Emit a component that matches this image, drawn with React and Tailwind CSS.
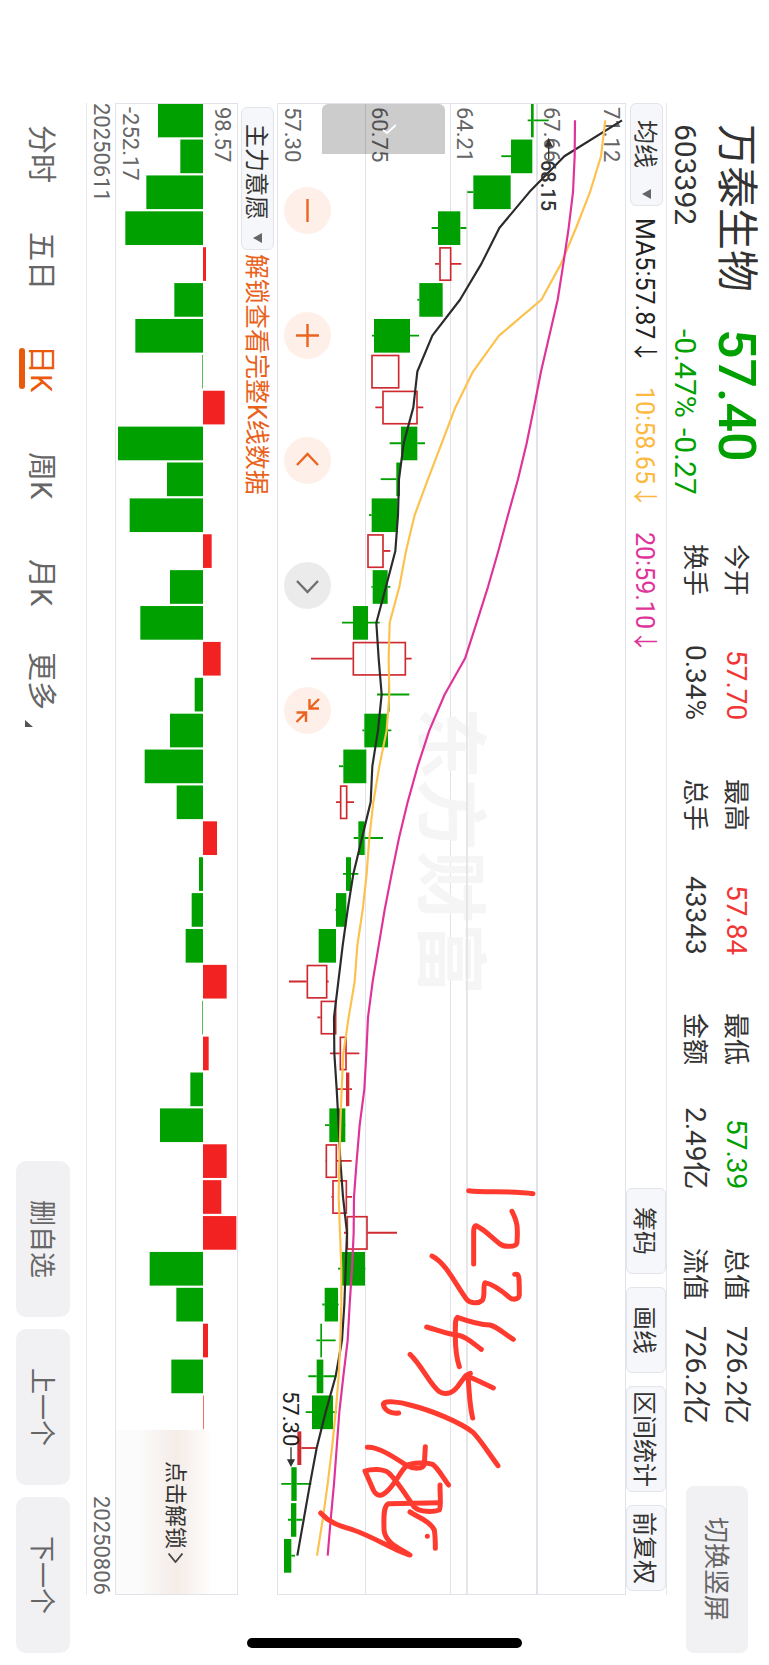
import React from "react";

const GREEN = "#00a000";
const RED = "#cf2a30";

// [wick low, body low, body high, wick high, direction]; "f" is a rise too small to leave a hollow body
const candles = [
  [773, 783, 791, 836, "d"],
  [694, 723, 787, 787, "d"],
  [592, 610, 722, 722, "d"],
  [485, 504, 571, 589, "d"],
  [495, 508, 543, 574, "u"],
  [442, 448, 518, 518, "d"],
  [306, 312, 420, 447, "d"],
  [304, 304, 387, 387, "u"],
  [316, 337, 442, 460, "u"],
  [359, 393, 442, 465, "d"],
  [332, 379, 390, 390, "d"],
  [297, 305, 383, 383, "d"],
  [292, 292, 340, 361, "u"],
  [304, 308, 353, 361, "d"],
  [216, 249, 294, 329, "d"],
  [123, 248, 407, 425, "u"],
  [321, 354, 359, 418, "d"],
  [277, 283, 354, 364, "d"],
  [207, 220, 289, 289, "d"],
  [198, 210, 231, 252, "u"],
  [251, 265, 284, 339, "d"],
  [219, 228, 243, 265, "d"],
  [196, 198, 229, 229, "d"],
  [146, 146, 198, 198, "d"],
  [57, 110, 171, 176, "u"],
  [142, 152, 198, 198, "u"],
  [180, 209, 229, 268, "u"],
  [201, 228, 238, 246, "f"],
  [165, 178, 226, 227, "d"],
  [166, 167, 200, 245, "u"],
  [184, 187, 230, 246, "u"],
  [222, 230, 292, 381, "u"],
  [204, 215, 285, 286, "d"],
  [157, 164, 204, 206, "d"],
  [139, 151, 156, 197, "d"],
  [115, 140, 160, 198, "d"],
  [107, 126, 189, 201, "d"],
  [82, 82, 94, 140, "f"],
  [34, 64, 80, 124, "d"],
  [54, 63, 79, 97, "d"],
  [42, 42, 64, 75, "d"],
];

const ma5 = [1056, 883, 778, 688, 634, 570, 487, 442, 430, 401, 387, 384, 376, 348, 319, 326, 335, 324, 307, 302, 276, 250, 233, 218, 205, 192, 193, 200, 206, 211, 219, 231, 227, 223, 216, 197, 167, 140, 120, 101, 82];
const ma10 = [1006, 993, 960, 918, 873, 814, 687, 609, 556, 515, 474, 434, 408, 388, 359, 356, 358, 350, 328, 310, 298, 290, 278, 262, 254, 236, 220, 215, 211, 208, 206, 210, 214, 214, 211, 206, 197, 186, 173, 158, 141];
const ma20 = [915, 914, 909, 896, 880, 863, 838, 813, 792, 770, 744, 714, 685, 654, 620, 585, 524, 478, 443, 413, 387, 365, 344, 326, 308, 294, 289, 283, 269, 260, 252, 251, 246, 239, 233, 220, 208, 200, 192, 182, 173];

const flows = [474, 541, 439, 376, 618, 523, 406, 607, 674, 354, 501, 389, 635, 510, 421, 662, 584, 510, 434, 530, 651, 597, 575, 557, 680, 607, 626, 571, 480, 680, 664, 709, 449, 529, 624, 514, 611];

const STEP = 107.65;
const FIRST = 49;
const at = (i) => FIRST + i * STEP;
const line = (values) => values.map((v, i) => `${v},${at(i)}`).join(" ");

const stats = [
  [["今开", "57.70", "text-[#f23636]"], ["换手", "0.34%", "text-[#333]"]],
  [["最高", "57.84", "text-[#f23636]"], ["总手", "43343", "text-[#333]"]],
  [["最低", "57.39", "text-[#00a000]"], ["金额", "2.49亿", "text-[#333]"]],
  [["总值", "726.2亿", "text-[#333]"], ["流值", "726.2亿", "text-[#333]"]],
];

function Header() {
  return (
    <header className="flex w-[102px] shrink-0 pt-[124px] pb-[12px]">
      <div className="flex h-[205px] shrink-0 flex-col gap-[10px] pr-[9px]">
        <h1 className="text-[42px] leading-[48px] text-[#333]">万泰生物</h1>
        <p className="text-[30px] leading-[34px] text-[#333]">603392</p>
      </div>
      <div className="flex h-[215px] shrink-0 flex-col gap-[10px] pr-[9px] text-[#00a000]">
        <p className="text-[52px] font-medium leading-[48px]">57.40</p>
        <p className="flex gap-[10px] text-[30px] leading-[34px]">
          <span>-0.47%</span>
          <span>-0.27</span>
        </p>
      </div>
      <div className="flex flex-1 gap-[58px] pr-[17px]">
        {stats.map((column) => (
          <dl key={column[0][0]} className="flex flex-1 flex-col gap-[9px]">
            {column.map(([label, value, tone]) => (
              <div key={label} className="flex justify-between leading-[32px]">
                <dt className="text-[26px] text-[#333]">{label}</dt>
                <dd className={`text-[28px] ${tone}`}>{value}</dd>
              </div>
            ))}
          </dl>
        ))}
      </div>
      <button type="button" className="mt-[62px] mr-[21px] h-[167px] w-[62px] shrink-0 rounded-lg bg-[#f1f1f4] pr-[2px] text-[26px] leading-[32px] text-[#666]">
        切换竖屏
      </button>
    </header>
  );
}

function Picker({ label, value, size }) {
  return (
    <div className={`relative w-[33px] shrink-0 ${size}`}>
      <select aria-label={label} className="size-full appearance-none rounded-md border border-[#e2e4e9] bg-[#f6f7fa] pt-[16px] pr-[4px] text-[24px] leading-[26px] text-[#333]">
        <option>{value}</option>
      </select>
      <svg className="pointer-events-none absolute bottom-[7px] left-[12px] h-[10px] w-[9px]" viewBox="0 0 9 10" aria-hidden="true">
        <path d="M0 5 9 0V10Z" fill="#666" />
      </svg>
    </div>
  );
}

const tools = [
  ["筹码", "h-[86px]"],
  ["画线", "h-[86px]"],
  ["区间统计", "h-[106px]"],
  ["前复权", "h-[86px]"],
];

function Toolbar() {
  return (
    <section className="mt-[103px] mb-[70px] flex w-[41px] shrink-0 border-r border-[#e6e6ec]">
      <div className="flex items-center">
        <Picker label="主图指标" value="均线" size="h-[103px]" />
      </div>
      <div className="flex flex-1 items-center gap-[23px] pt-3 pr-[4px] text-[25px] leading-[32px]">
        <span className="text-[#222]">MA5:57.87↓</span>
        <span className="text-[#fdb93f]">10:58.65↓</span>
        <span className="text-[#e0339a]">20:59.10↓</span>
      </div>
      <div className="flex gap-[13px] pb-[4px]">
        {tools.map(([name, size]) => (
          <button key={name} type="button" className={`w-[40px] shrink-0 rounded-md border border-[#e2e4e9] bg-[#f6f7fa] pr-[4px] text-[24px] leading-[30px] text-[#333] ${size}`}>
            {name}
          </button>
        ))}
      </div>
    </section>
  );
}

const controls = [
  ["缩小", "M23.5 12V35", false],
  ["放大", "M23.5 12V35M12 23.5H35", false],
  ["左移", "M13 28 23.5 17 34 28", false],
  ["右移", "M13 19 23.5 30 34 19", true],
  ["收起", "M35 12 25.5 21.5M25.5 12V21.5H35M12.5 35 22 25.5M12.5 25.5H22V35", false],
];

function PriceChart() {
  return (
    <section className="relative mt-[103px] mb-[70px] min-w-0 flex-1 border border-[#e2e2ea]">
      <div className="flex size-full flex-col-reverse text-[22px] leading-[22px] text-[#666]">
        <div className="flex w-[88px] shrink-0 flex-col-reverse border-r border-[#e2e2ea] pt-[3px] pl-[3px]">57.30</div>
        <div className="flex flex-1 flex-col-reverse border-r border-[#e2e2ea] pt-[3px] pl-[2px]">60.75</div>
        <div className="flex flex-1 flex-col-reverse border-r-2 border-[#e2e2ea] pt-[3px] pl-[2px]">64.21</div>
        <div className="flex flex-1 flex-col-reverse justify-between pt-[3px] pr-[3px] pl-[2px]">
          <span>67.66</span>
          <span>71.12</span>
        </div>
      </div>

      <p className="absolute top-[603px] left-[135px] text-[72px] font-bold leading-[72px] text-[#f5f5f6]">东方财富</p>

      <svg className="absolute inset-0 size-full" viewBox="24 0 1041 4470" preserveAspectRatio="none" role="img" aria-label="日K线图">
        <path d="M591 258V4470" stroke="#e2e2e6" strokeWidth="5" />
        {candles.map(([wl, bl, bh, wh, dir], i) => {
          const c = at(i);
          const tone = dir === "d" ? GREEN : RED;
          const hollow = dir === "u";
          return (
            <g key={i} stroke={tone} strokeWidth="5.5">
              <path d={`M${wl} ${c}H${bl}M${bh} ${c}H${wh}`} />
              {hollow ? (
                <rect x={bl + 2} y={c - 48} width={bh - bl - 3} height="97" fill="none" strokeWidth="5" />
              ) : (
                <rect x={bl} y={c - 50} width={bh - bl} height="101" fill={tone} stroke="none" />
              )}
            </g>
          );
        })}
        <g fill="none" strokeWidth="6.5" strokeLinejoin="round">
          <polyline points={line(ma5)} stroke="#2b2b2b" />
          <polyline points={line(ma10)} stroke="#fdc14e" />
          <polyline points={line(ma20)} stroke="#e0339a" />
        </g>
        <g fill="#333" stroke="#333" strokeWidth="4">
          <path d="M836 118V165" />
          <path d="M836 106 827 126H845Z" />
          <path d="M63 4030V4075" />
          <path d="M63 4085 54 4068H72Z" />
        </g>
        <g fill="none" stroke="#ff3b30" strokeWidth="15" strokeLinecap="round" strokeLinejoin="round">
          <g transform="translate(0 2838)">
            <path d="M596 422C640 428 730 422 789 431" />
            <path d="M726 484C742 515 744 530 741 578C738 592 702 592 690 582C665 562 640 536 618 527C611 528 612 534 611 545V642" />
            <path d="M734 673C748 670 748 678 748 735C746 750 728 750 718 742C695 722 665 702 645 698C638 705 647 740 636 752C625 762 600 760 590 748C560 710 530 640 486 618" />
            <path d="M730 868C700 850 685 832 660 825C630 824 590 812 562 802C555 808 556 820 556 860C556 900 560 925 568 950" />
            <path d="M470 831C510 843 540 855 565 856C590 860 615 885 634 898" />
          </g>
          <g transform="translate(-120 3678)">
            <path d="M540 73C575 105 600 165 628 185C650 198 672 188 690 160L707 137 721 130M712 138C735 148 765 162 790 174M714 140C718 180 718 225 728 264" />
            <path d="M506 249C480 252 462 240 460 222C462 210 510 216 540 225C600 240 690 275 730 308C755 335 780 375 804 407" />
            <path d="M412 352C445 350 490 380 528 405C550 418 580 418 583 402L586 350" />
            <path d="M656 465C640 445 625 415 608 403C590 396 545 398 530 407C510 425 500 455 475 480C455 502 440 500 430 480L405 423C425 416 460 416 475 428C500 450 530 500 552 530C570 548 610 546 628 540C634 530 630 500 630 465" />
            <path d="M630 518 475 521C458 530 462 570 462 600C466 640 510 655 540 675C500 665 430 620 370 600C330 587 300 580 272 549" />
            <path d="M540 546C575 567 600 575 613 600C616 620 616 640 616 655M592 619V619" />
          </g>
        </g>
      </svg>

      <span className="absolute top-[56px] left-[259px] text-[20px] font-medium leading-[22px] text-[#333]">68.15</span>
      <span className="absolute top-[1287px] left-[1px] text-[22px] leading-[22px] text-[#222]">57.30</span>

      <button type="button" aria-label="展开" className="absolute top-0 left-[44px] flex h-[50px] w-[123px] items-center justify-center rounded-t-md bg-black/20">
        <svg className="h-[10px] w-[24px]" viewBox="0 0 24 10" fill="none" aria-hidden="true">
          <path d="M11 6 15 9 24 1" stroke="#fff" strokeWidth="2" />
        </svg>
      </button>

      <div className="absolute top-[83px] left-[6px] flex gap-[78px]">
        {controls.map(([name, d, muted]) => (
          <button key={name} type="button" aria-label={name} className={`size-[47px] rounded-full ${muted ? "bg-[#ebebeb] text-[#707070]" : "bg-[#fef0e8] text-[#ea6420]"}`}>
            <svg className="size-[47px]" viewBox="0 0 47 47" fill="none" stroke="currentColor" strokeWidth="2.4" aria-hidden="true">
              <path d={d} />
            </svg>
          </button>
        ))}
      </div>
    </section>
  );
}

function IndicatorBar() {
  return (
    <section className="mt-[107px] mb-[70px] flex w-[39px] shrink-0 items-center gap-[4px]">
      <Picker label="副图指标" value="主力意愿" size="h-[143px]" />
      <a href="#unlock" className="pr-[4px] text-[25px] leading-[30px] text-[#e8621c]">解锁查看完整K线数据</a>
    </section>
  );
}

function IndicatorChart() {
  return (
    <section className="relative mt-[103px] mb-[70px] flex w-[123px] shrink-0 border border-[#e2e2ea]">
      <svg className="absolute inset-0 size-full" viewBox="348 0 363 4470" preserveAspectRatio="none" role="img" aria-label="主力意愿">
        {flows.map((v, i) => (
          <rect key={i} x={Math.min(v, 609)} y={at(i) - 50} width={Math.abs(v - 609)} height="101" fill={v < 609 ? GREEN : "#f32222"} />
        ))}
      </svg>
      <div className="relative flex flex-1 flex-col justify-between pt-[3px] pr-[4px] pl-[3px] text-[22px] leading-[22px] text-[#666]">
        <span>98.57</span>
        <span>-252.17</span>
      </div>
      <button type="button" className="relative flex h-[164px] shrink-0 items-center justify-center gap-1 bg-linear-to-r from-[#fbfbfb] from-20% via-[#f4ece7] via-50% to-white to-80% pr-[3px] text-[22px] leading-[26px] text-[#333]">
        点击解锁
        <svg className="h-[10px] w-[15px]" viewBox="0 0 15 10" fill="none" aria-hidden="true">
          <path d="M.5.5 7.5 9 14.5.5" stroke="#444" strokeWidth="1.8" />
        </svg>
      </button>
    </section>
  );
}

function Dates() {
  return (
    <div className="mt-[103px] mb-[70px] flex w-[29px] shrink-0 justify-between border-l border-[#e8e8ec] text-[22px] leading-[27px] text-[#666]">
      <time dateTime="2025-06-11">20250611</time>
      <time dateTime="2025-08-06">20250806</time>
    </div>
  );
}

const tabs = ["分时", "五日", "日K", "周K", "月K", "更多"];

function Footer() {
  return (
    <footer className="flex w-[86px] shrink-0 justify-between pt-[101px] pb-[12px]">
      <nav className="flex">
        {tabs.map((name) => {
          const active = name === "日K";
          return (
            <button key={name} type="button" className={`flex h-[107px] flex-col items-center pr-[29px] text-[29px] leading-[32px] ${active ? "text-[#ea5a0a]" : "text-[#666]"}`}>
              <span className="flex">
                {name}
                {name === "更多" && (
                  <svg className="mt-[7px] h-[9px] w-[9px] self-end" viewBox="0 0 9 9" aria-hidden="true">
                    <path d="M0 2V9H8Z" fill="#555" />
                  </svg>
                )}
              </span>
              <span className={`h-[41px] w-[6px] rounded-full ${active ? "bg-[#ea5a0a]" : "bg-transparent"}`} />
            </button>
          );
        })}
      </nav>
      <div className="flex gap-[12px] pr-[16px]">
        {["删自选", "上一个", "下一个"].map((name) => (
          <button key={name} type="button" className="h-[156px] w-[54px] rounded-[10px] bg-[#f1f1f4] pr-[2px] text-[26px] leading-[32px] text-[#666]">
            {name}
          </button>
        ))}
      </div>
    </footer>
  );
}

export default function App() {
  return (
    <main className="relative flex h-screen w-full flex-col bg-white font-[Roboto,'Noto_Sans_CJK_SC',sans-serif] [text-orientation:sideways] [writing-mode:vertical-rl]">
      <Header />
      <Toolbar />
      <PriceChart />
      <IndicatorBar />
      <IndicatorChart />
      <Dates />
      <Footer />
      <div className="absolute bottom-[17px] left-[247px] h-[10px] w-[275px] rounded-full bg-black" />
    </main>
  );
}
